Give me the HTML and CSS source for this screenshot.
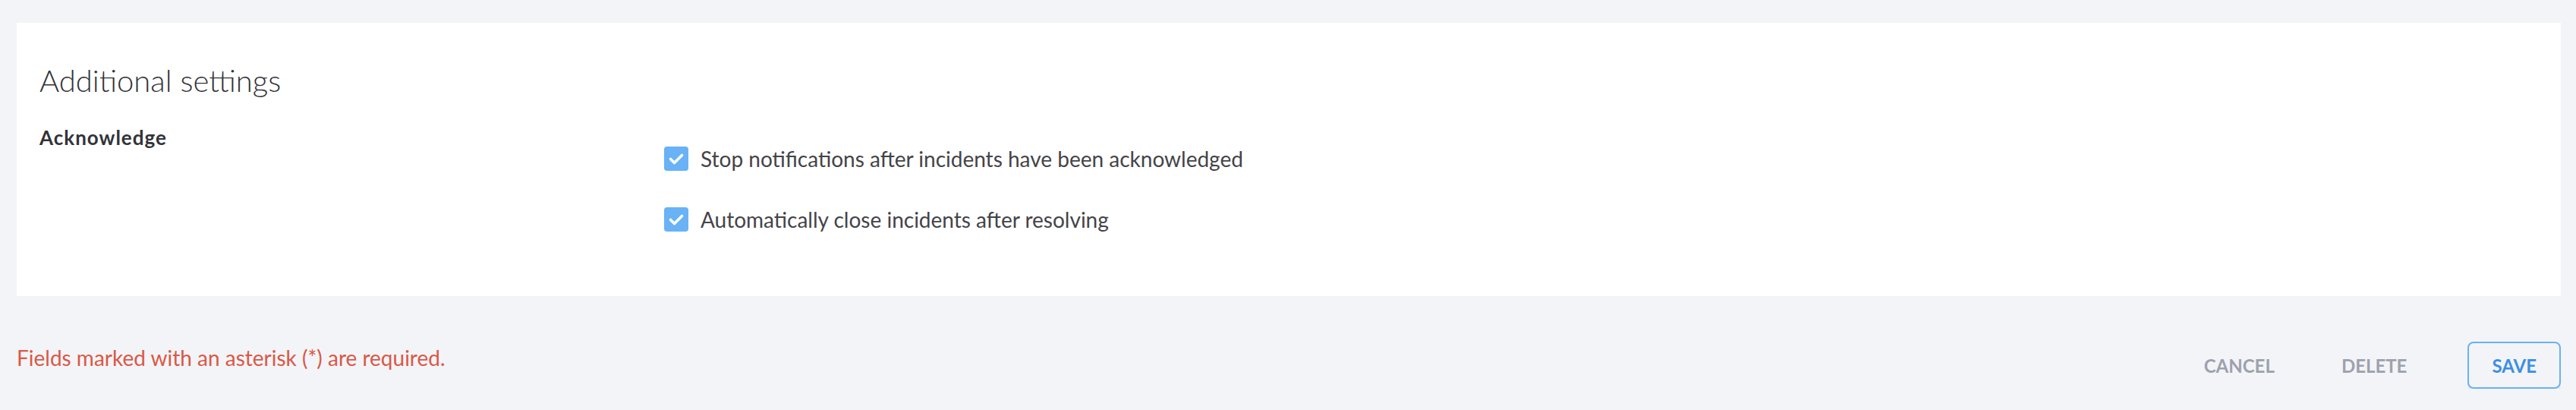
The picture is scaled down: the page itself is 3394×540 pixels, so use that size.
FILE: index.html
```html
<!DOCTYPE html>
<html lang="en">
<head>
    <meta charset="UTF-8">
    <meta name="viewport" content="width=device-width, initial-scale=1.0">
    <title>Additional settings</title>
    <link rel="stylesheet" href="styles.css">
</head>
<body>

    <div class="page">
        <section class="card">
            <h2 class="card-title">Additional settings</h2>

            <div class="field-row">
                <div class="field-label">Acknowledge</div>
                <div class="field-options">
                    <label class="check">
                        <span class="check-box">
                            <svg viewBox="0 0 32 32" width="32" height="32"><path d="M8.5 16.5l5 5 10-10" /></svg>
                        </span>
                        Stop notifications after incidents have been acknowledged
                    </label>
                    <label class="check">
                        <span class="check-box">
                            <svg viewBox="0 0 32 32" width="32" height="32"><path d="M8.5 16.5l5 5 10-10" /></svg>
                        </span>
                        Automatically close incidents after resolving
                    </label>
                </div>
            </div>
        </section>

        <footer class="form-footer">
            <p class="required-note">Fields marked with an asterisk (*) are required.</p>
            <div class="actions">
                <button class="btn btn-link">Cancel</button>
                <button class="btn btn-link">Delete</button>
                <button class="btn btn-outline">Save</button>
            </div>
        </footer>
    </div>

</body>
</html>
```

FILE: styles.css
```css
/* Root Variables */
:root {
    --bg: #f3f4f7;
    --text: #333338;
    --text-soft: #444448;
    --blue: #3b8fe3;
    --blue-light: #68b2f5;
    --gray: #9da1ae;
    --red: #da5847;
}

/* General Styles */
body {
    background-color: var(--bg);
    font-family: 'Lato', 'Liberation Sans', sans-serif;
    color: var(--text);
    margin: 0;
    padding: 0;
}

.page {
    padding: 30px 20px 0 22px;
}

/* Card */
.card {
    background: white;
    padding: 52px 30px 85px 30px;
}

.card-title {
    font-size: 40px;
    font-weight: 300;
    line-height: 48px;
    margin: 0 0 35px 0;
    color: var(--text);
}

.field-row {
    display: grid;
    grid-template-columns: 25% 75%;
}

.field-label {
    font-size: 26px;
    font-weight: 700;
    letter-spacing: 1px;
    line-height: 32px;
}

.field-options {
    padding-top: 28px;
    display: flex;
    flex-direction: column;
    gap: 48px;
}

/* Checkbox */
.check {
    display: flex;
    align-items: center;
    gap: 16px;
    font-size: 28px;
    line-height: 32px;
    color: var(--text-soft);
    cursor: pointer;
}

.check-box {
    width: 32px;
    height: 32px;
    border-radius: 4px;
    background: var(--blue-light);
    flex-shrink: 0;
}

.check-box svg {
    display: block;
    fill: none;
    stroke: white;
    stroke-width: 3.6;
    stroke-linecap: round;
    stroke-linejoin: round;
}

/* Footer */
.form-footer {
    display: flex;
    justify-content: space-between;
    align-items: flex-start;
    padding-top: 60px;
}

.required-note {
    margin: 0;
    padding-top: 5px;
    font-size: 28px;
    line-height: 32px;
    color: var(--red);
}

.actions {
    display: flex;
    align-items: center;
    gap: 24px;
}

.btn {
    font-family: inherit;
    font-size: 24px;
    font-weight: 700;
    text-transform: uppercase;
    height: 62px;
    padding: 0 30px;
    border: 2px solid transparent;
    border-radius: 8px;
    background: none;
    cursor: pointer;
}

.btn-link {
    color: var(--gray);
}

.btn-outline {
    margin-left: 24px;
    color: var(--blue);
    border-color: var(--blue-light);
    box-shadow: 0 4px 0 rgba(0, 0, 0, 0.04);
}
```
